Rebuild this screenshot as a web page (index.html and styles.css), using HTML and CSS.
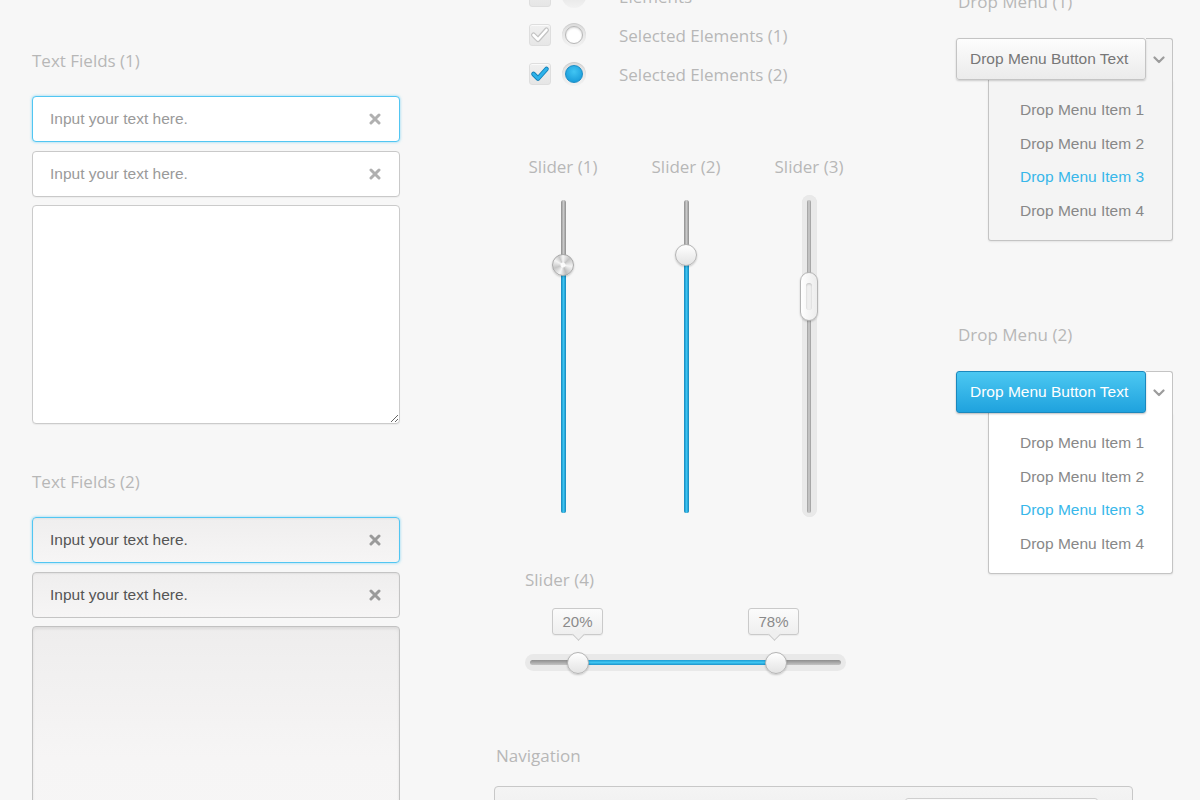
FILE: index.html
```html
<!DOCTYPE html>
<html lang="en">
<head>
<meta charset="utf-8">
<title>UI Kit</title>
<link rel="stylesheet" href="styles.css">
</head>
<body>
<div class="page">
  <section class="col-left">
    <h2 class="label">Text Fields (1)</h2>
    <div class="field field--focus">
      <input class="field-input" type="text" placeholder="Input your text here.">
      <span class="clear"><svg viewBox="0 0 12 12" width="12" height="12"><path d="M2 2 L10 10 M10 2 L2 10" /></svg></span>
    </div>
    <div class="field">
      <input class="field-input" type="text" placeholder="Input your text here.">
      <span class="clear"><svg viewBox="0 0 12 12" width="12" height="12"><path d="M2 2 L10 10 M10 2 L2 10" /></svg></span>
    </div>
    <textarea class="area"></textarea>

    <h2 class="label label--second">Text Fields (2)</h2>
    <div class="field field--grey field--focus">
      <input class="field-input" type="text" value="Input your text here.">
      <span class="clear clear--dark"><svg viewBox="0 0 12 12" width="12" height="12"><path d="M2 2 L10 10 M10 2 L2 10" /></svg></span>
    </div>
    <div class="field field--grey">
      <input class="field-input" type="text" value="Input your text here.">
      <span class="clear clear--dark"><svg viewBox="0 0 12 12" width="12" height="12"><path d="M2 2 L10 10 M10 2 L2 10" /></svg></span>
    </div>
    <textarea class="area area--grey"></textarea>
  </section>

  <section class="col-main">
    <div class="top-row">
      <div class="col-mid">
        <ul class="checks">
          <li class="check-row">
            <span class="checkbox"></span>
            <span class="radio"></span>
            <span class="check-text">Elements</span>
          </li>
          <li class="check-row">
            <span class="checkbox"><svg viewBox="0 0 22 22" width="22" height="22"><polyline class="ck-out" points="4.5,11 9,15.5 17.5,6"/><polyline class="ck-in" points="4.5,11 9,15.5 17.5,6"/></svg></span>
            <span class="radio"><span class="radio-dot"></span></span>
            <span class="check-text">Selected Elements (1)</span>
          </li>
          <li class="check-row">
            <span class="checkbox"><svg viewBox="0 0 22 22" width="22" height="22"><polyline class="ck-blue-out" points="4.5,11 9,15.5 17.5,6"/><polyline class="ck-blue" points="4.5,11 9,15.5 17.5,6"/></svg></span>
            <span class="radio"><span class="radio-dot radio-dot--on"></span></span>
            <span class="check-text">Selected Elements (2)</span>
          </li>
        </ul>

        <div class="vsliders">
          <div class="vslider">
            <h2 class="label label--center">Slider (1)</h2>
            <div class="vgroove">
              <div class="vtrack">
                <div class="vfill" style="height:248px"></div>
                <span class="knob knob--metal" style="top:54px"></span>
              </div>
            </div>
          </div>
          <div class="vslider">
            <h2 class="label label--center">Slider (2)</h2>
            <div class="vgroove">
              <div class="vtrack">
                <div class="vfill" style="height:258px"></div>
                <span class="knob" style="top:44px"></span>
              </div>
            </div>
          </div>
          <div class="vslider">
            <h2 class="label label--center">Slider (3)</h2>
            <div class="vgroove vgroove--well">
              <div class="vtrack vtrack--thin">
                <span class="pill" style="top:72px"><span class="pill-slot"></span></span>
              </div>
            </div>
          </div>
        </div>

        <div class="hslider">
          <h2 class="label">Slider (4)</h2>
          <div class="hgroove">
            <div class="htrack">
              <div class="hfill" style="left:48px;width:198px"></div>
            </div>
            <span class="tip" style="left:27px">20%</span>
            <span class="tip" style="left:223px">78%</span>
            <span class="knob knob--h" style="left:42px"></span>
            <span class="knob knob--h" style="left:240px"></span>
          </div>
        </div>
      </div>

      <div class="col-right">
        <h2 class="label">Drop Menu (1)</h2>
        <div class="dd">
          <div class="dd-head">
            <button class="dd-btn" type="button">Drop Menu Button Text</button>
            <span class="dd-arrow"><svg viewBox="0 0 12 8" width="12" height="8"><polyline points="1.5,1.5 6,6 10.5,1.5"/></svg></span>
          </div>
          <ul class="dd-menu">
            <li>Drop Menu Item 1</li>
            <li>Drop Menu Item 2</li>
            <li class="active">Drop Menu Item 3</li>
            <li>Drop Menu Item 4</li>
          </ul>
        </div>

        <h2 class="label label--dd2">Drop Menu (2)</h2>
        <div class="dd dd--blue">
          <div class="dd-head">
            <button class="dd-btn" type="button">Drop Menu Button Text</button>
            <span class="dd-arrow"><svg viewBox="0 0 12 8" width="12" height="8"><polyline points="1.5,1.5 6,6 10.5,1.5"/></svg></span>
          </div>
          <ul class="dd-menu">
            <li>Drop Menu Item 1</li>
            <li>Drop Menu Item 2</li>
            <li class="active">Drop Menu Item 3</li>
            <li>Drop Menu Item 4</li>
          </ul>
        </div>
      </div>
    </div>

    <div class="nav-section">
      <h2 class="label">Navigation</h2>
      <nav class="navbar">
        <div class="nav-search"></div>
      </nav>
    </div>
  </section>
</div>
</body>
</html>
```

FILE: styles.css
```css
* { box-sizing: border-box; }

html, body {
  margin: 0;
  padding: 0;
  background: #f7f7f7;
  overflow: hidden;
}

body {
  font-family: "Liberation Sans", Arial, sans-serif;
  width: 1200px;
  height: 800px;
}

.page {
  display: flex;
  margin-top: -24px;
  padding-left: 32px;
  gap: 94px;
}

/* labels */
.label {
  margin: 0;
  font-family: "Open Sans", "DejaVu Sans", sans-serif;
  font-weight: 400;
  font-size: 17px;
  line-height: 20px;
  color: #b7b7b7;
  white-space: nowrap;
}

/* ---------- left column ---------- */
.col-left {
  width: 368px;
  flex: none;
  padding-top: 75px;
  display: flex;
  flex-direction: column;
}

.col-left > .label { margin-bottom: 25px; }
.col-left > .label--second { margin-top: 48px; }

.field {
  height: 46px;
  border: 1px solid #c9c9c9;
  border-radius: 4px;
  background: #fff;
  display: flex;
  align-items: center;
  padding: 0 18px 0 17px;
  margin-bottom: 9px;
  box-shadow: 0 1px 1px rgba(0,0,0,0.04);
}

.field + .field { margin-bottom: 8px; }

.field--focus {
  border-color: #52c6f2;
  box-shadow: 0 0 3px rgba(82,198,242,0.7);
}

.field-input {
  flex: 1;
  border: 0;
  outline: 0;
  background: transparent;
  padding: 0;
  margin: 0;
  font-family: "Liberation Sans", Arial, sans-serif;
  font-size: 15.5px;
  color: #555;
}

.field-input::placeholder { color: #9a9a9a; opacity: 1; }

.clear {
  width: 12px;
  height: 12px;
  display: block;
}
.clear svg { display: block; }
.clear path {
  stroke: #b0b0b0;
  stroke-width: 3;
  stroke-linecap: round;
  fill: none;
}
.clear--dark path { stroke: #9a9a9a; }

.field--grey {
  background: linear-gradient(#efeeee, #f6f5f5);
  border-color: #c4c4c4;
  box-shadow: inset 0 1px 2px rgba(0,0,0,0.06);
}
.field--grey.field--focus {
  border-color: #52c6f2;
  box-shadow: 0 0 3px rgba(82,198,242,0.7), inset 0 1px 2px rgba(0,0,0,0.05);
}

.area {
  display: block;
  width: 368px;
  height: 219px;
  border: 1px solid #cbcbcb;
  border-radius: 4px;
  background: #fff;
  resize: both;
  margin: 0;
  padding: 10px 17px;
  font-family: "Liberation Sans", Arial, sans-serif;
  font-size: 15.5px;
  outline: 0;
  box-shadow: 0 1px 1px rgba(0,0,0,0.05);
}

.area--grey {
  background: linear-gradient(#eeeded, #f6f5f5 60%, #f7f6f6);
  border-color: #c2c2c2;
  box-shadow: inset 0 2px 3px rgba(0,0,0,0.08);
}

/* ---------- main area ---------- */
.col-main {
  flex: none;
  width: 706px;
  display: flex;
  flex-direction: column;
}

.top-row {
  display: flex;
}

.col-mid {
  width: 462px;
  flex: none;
  padding-left: 24px;
  padding-top: 8px;
}

/* checks */
.checks {
  list-style: none;
  margin: 0 0 0 11px;
  padding: 0;
  display: flex;
  flex-direction: column;
  gap: 15px;
}

.check-row {
  height: 24px;
  display: flex;
  align-items: center;
}

.checkbox {
  width: 22px;
  height: 22px;
  border: 1px solid #dedede;
  border-radius: 3px;
  background: linear-gradient(#f0f0f0, #e6e6e6);
  box-shadow: inset 0 1px 0 #fafafa;
  display: block;
  position: relative;
}
.checkbox svg { display: block; position: absolute; left: -1px; top: -1px; }
.checkbox polyline { fill: none; stroke-linecap: round; stroke-linejoin: round; }
.ck-out { stroke: #c4c4c4; stroke-width: 5; }
.ck-in { stroke: #ffffff; stroke-width: 2.6; }
.ck-blue-out { stroke: #1582b8; stroke-width: 4.6; }
.ck-blue { stroke: #2db2ea; stroke-width: 2.8; }

.radio {
  width: 24px;
  height: 24px;
  margin-left: 11px;
  border-radius: 50%;
  background: linear-gradient(#dcdcdc, #f2f2f2);
  box-shadow: inset 0 1px 1px rgba(0,0,0,0.08);
  display: flex;
  align-items: center;
  justify-content: center;
}

.radio-dot {
  width: 18px;
  height: 18px;
  border-radius: 50%;
  background: #fff;
  border: 1px solid #b6b6b6;
  box-shadow: inset 0 1px 2px rgba(0,0,0,0.15);
}

.radio-dot--on {
  background: radial-gradient(circle at 50% 35%, #41c5f3, #1c9fdc 75%);
  border-color: #1a8cc5;
  box-shadow: none;
}

.check-text {
  margin-left: 33px;
  font-family: "Open Sans", "DejaVu Sans", sans-serif;
  font-size: 17px;
  color: #b7b7b7;
  white-space: nowrap;
}

/* vertical sliders */
.vsliders {
  margin-top: 71px;
  display: flex;
  gap: 33px;
}

.vslider {
  width: 90px;
  display: flex;
  flex-direction: column;
  align-items: center;
}

.label--center { text-align: center; }

.vgroove {
  margin-top: 18px;
  width: 15px;
  height: 322px;
  padding: 5px 0 4px;
  border-radius: 8px;
  display: flex;
  justify-content: center;
}

.vgroove--well {
  background: #e9e9e9;
  box-shadow: inset 0 0 1px rgba(0,0,0,0.05);
}

.vtrack {
  position: relative;
  width: 5px;
  height: 313px;
  border-radius: 3px;
  background: linear-gradient(to right, #8e8e8e, #c8c8c8 50%, #8e8e8e);
}

.vtrack--thin {
  width: 4px;
  background: linear-gradient(to right, #9a9a9a, #cfcfcf 50%, #9a9a9a);
}

.vfill {
  position: absolute;
  left: 0;
  right: 0;
  bottom: 0;
  border-radius: 3px;
  background: linear-gradient(to right, #1487bd, #3cc4f1 50%, #1487bd);
}

.knob {
  position: absolute;
  left: 50%;
  width: 22px;
  height: 22px;
  margin-left: -11px;
  border-radius: 50%;
  border: 1px solid #b4b4b4;
  background: linear-gradient(#ffffff, #e3e3e3);
  box-shadow: 0 1px 2px rgba(0,0,0,0.2);
}

.knob--metal {
  background:
    radial-gradient(circle, rgba(255,255,255,0.9) 0 2px, transparent 3px),
    conic-gradient(from 0deg, #f6f6f6, #c4c4c4 45deg, #f4f4f4 100deg, #bdbdbd 160deg, #f6f6f6 200deg, #c6c6c6 250deg, #f4f4f4 300deg, #c9c9c9 335deg, #f6f6f6);
  border-color: #a9a9a9;
}

.pill {
  position: absolute;
  left: 50%;
  width: 18px;
  height: 49px;
  margin-left: -9px;
  border-radius: 9px;
  border: 1px solid #b5b5b5;
  background: linear-gradient(to right, #ffffff, #ececec);
  box-shadow: 0 1px 2px rgba(0,0,0,0.2);
  display: flex;
  align-items: center;
  justify-content: center;
}

.pill-slot {
  width: 6px;
  height: 27px;
  border-radius: 3px;
  background: #efefef;
  box-shadow: inset 0 1px 2px rgba(0,0,0,0.2);
}

/* horizontal slider */
.hslider {
  margin-top: 53px;
  margin-left: 7px;
}

.hgroove {
  position: relative;
  margin-top: 64px;
  width: 321px;
  height: 17px;
  border-radius: 9px;
  background: #e9e9e9;
  padding: 6px 5px 0;
}

.htrack {
  position: relative;
  height: 5px;
  border-radius: 3px;
  background: linear-gradient(#8e8e8e, #c4c4c4);
}

.hfill {
  position: absolute;
  top: 0;
  bottom: 0;
  background: linear-gradient(#1d9bd3, #3ec5f1 50%, #1b93cb);
}

.knob--h {
  top: -2px;
  margin-left: 0;
}

.tip {
  position: absolute;
  top: -46px;
  width: 51px;
  height: 27px;
  border: 1px solid #cacaca;
  border-radius: 3px;
  background: linear-gradient(#fbfbfb, #efefef);
  font-family: "Liberation Sans", Arial, sans-serif;
  font-size: 15px;
  line-height: 25px;
  color: #8a8a8a;
  text-align: center;
  box-shadow: 0 1px 1px rgba(0,0,0,0.05);
}

.tip::after {
  content: "";
  position: absolute;
  left: 50%;
  bottom: -5px;
  width: 8px;
  height: 8px;
  margin-left: -4px;
  background: #efefef;
  border-right: 1px solid #cacaca;
  border-bottom: 1px solid #cacaca;
  transform: rotate(45deg);
}

/* right column */
.col-right {
  width: 218px;
  flex: none;
  padding-top: 16px;
  padding-left: 2px;
}

.col-right > .label { margin-bottom: 26px; }
.col-right > .label--dd2 { margin-top: 84px; }

.dd {
  margin-left: -2px;
  width: 218px;
}

.dd-head {
  display: flex;
  height: 42px;
}

.dd-btn {
  position: relative;
  z-index: 2;
  width: 190px;
  height: 42px;
  margin: 0;
  padding: 0 0 1px 13px;
  text-align: left;
  border: 1px solid #c4c4c4;
  border-radius: 3px;
  background: linear-gradient(#fdfdfd, #ebebeb);
  box-shadow: 0 1px 2px rgba(0,0,0,0.18);
  font-family: "Liberation Sans", Arial, sans-serif;
  font-size: 15.5px;
  color: #777;
  white-space: nowrap;
}

.dd-arrow {
  width: 27px;
  height: 42px;
  border: 1px solid #c4c4c4;
  border-left: 0;
  border-bottom: 0;
  border-radius: 0 3px 0 0;
  background: #f4f4f4;
  display: flex;
  align-items: center;
  justify-content: center;
}

.dd-arrow svg { display: block; margin-left: -1px; }
.dd-arrow polyline {
  fill: none;
  stroke: #9c9c9c;
  stroke-width: 2.2;
  stroke-linecap: round;
  stroke-linejoin: round;
}

.dd-menu {
  list-style: none;
  margin: 0 0 0 32px;
  width: 185px;
  height: 161px;
  padding: 13px 0 14px 31px;
  border: 1px solid #c4c4c4;
  border-top: 0;
  border-radius: 0 0 3px 3px;
  background: #f4f4f4;
  box-shadow: 0 1px 2px rgba(0,0,0,0.08);
}

.dd-menu li {
  font-family: "Liberation Sans", Arial, sans-serif;
  font-size: 15.5px;
  line-height: 33.5px;
  color: #888;
  white-space: nowrap;
}

.dd-menu li.active { color: #38b7ea; }

.dd--blue .dd-btn {
  border-color: #1b88bd;
  background: linear-gradient(#4cc8f2, #1fa2de);
  color: #fff;
  box-shadow: 0 1px 2px rgba(0,0,0,0.25);
}

.dd--blue .dd-arrow,
.dd--blue .dd-menu { background: #fff; }

/* navigation */
.nav-section {
  margin-top: 75px;
}

.nav-section .label { margin-left: 2px; }

.navbar {
  margin-top: 20px;
  width: 639px;
  height: 60px;
  border: 1px solid #c8c8c8;
  border-radius: 4px;
  background: linear-gradient(#f4f4f4, #ebebeb);
  padding: 11px 0 0 410px;
}

.nav-search {
  width: 193px;
  height: 36px;
  border: 1px solid #cfcfcf;
  border-radius: 3px;
  background: #fafafa;
}
```
